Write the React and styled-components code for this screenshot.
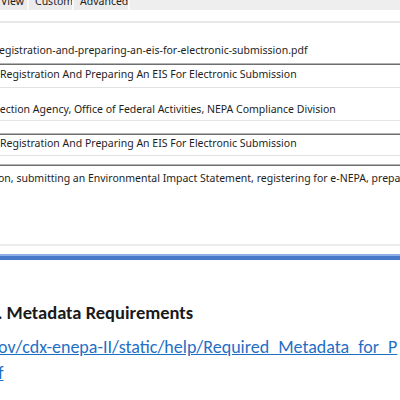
import React from "react";
import styled, { createGlobalStyle } from "styled-components";

const Global = createGlobalStyle`
  html, body { margin: 0; padding: 0; background: #fff; }
  body { width: 400px; height: 400px; overflow: hidden; }
`;

const Page = styled.div`
  width: 400px;
  height: 400px;
  overflow: hidden;
  font-family: "Noto Sans", "Open Sans", sans-serif;
  color: #1e1e1e;
`;

const TabBar = styled.div`
  height: 10px;
  background: #eeeeee;
  display: flex;
  overflow: hidden;
`;

const Tab = styled.div`
  flex: 0 0 ${(p) => p.w}px;
  margin-left: ${(p) => p.ml || 0}px;
  background: #ebebeb;
  border-right: 2px solid #f8f8f8;
  font-size: 10.5px;
  line-height: 14px;
  height: 16px;
  margin-top: -6px;
  padding-left: ${(p) => p.pl}px;
  color: #222;
  white-space: nowrap;
  overflow: hidden;
  box-sizing: border-box;
`;

const Strip = styled.div`
  height: 11px;
  border-bottom: 2px solid #e8e8e8;
`;

const Form = styled.div`
  display: flex;
  flex-direction: column;
  height: 221px;
  border-bottom: 2px solid #ededed;
  font-size: 10.5px;
  white-space: nowrap;
  overflow: hidden;
`;

const Plain = styled.div`
  flex: none;
  margin-top: ${(p) => p.mt || 0}px;
  line-height: ${(p) => p.lh}px;
  padding-bottom: ${(p) => p.pb || 0}px;
  border-bottom: ${(p) => (p.line ? "1px solid #e6e6e6" : "none")};
  margin-left: ${(p) => p.ml || 0}px;
`;

const Field = styled.div`
  flex: none;
  margin-top: ${(p) => p.mt || 0}px;
  line-height: ${(p) => p.lh}px;
  padding-bottom: ${(p) => p.pb || 0}px;
  border-top: 1px solid #6f6f6f;
  box-shadow: 0 -1px 0 #b4b4b4;
  border-bottom: ${(p) => (p.open ? "none" : "1px solid #e2e2e2")};
  margin-left: ${(p) => p.ml || 0}px;
`;

const Rule = styled.div`
  margin-top: 8px;
  height: 4px;
  background: #4a78c8;
  border-top: 2px solid #8fb0e6;
`;

const Content = styled.div`
  font-family: "Carlito", "Lato", "Liberation Sans", sans-serif;
  padding-top: 42px;
`;

const Heading = styled.h2`
  margin: 0;
  font-size: 18.5px;
  font-weight: 700;
  color: #1a1a1a;
  margin-left: -12px;
  white-space: nowrap;
  line-height: 22px;
`;

const Link = styled.a`
  display: block;
  margin-top: 10px;
  margin-left: -2px;
  font-size: 18px;
  line-height: 26px;
  color: #1f6fc5;
  text-decoration: underline;
  white-space: nowrap;
`;

export default function App() {
  return (
    <Page>
      <Global />
      <TabBar>
        <Tab w={29} pl={1}>View</Tab>
        <Tab w={45} pl={6}>Custom</Tab>
        <Tab w={56} pl={6}>Advanced</Tab>
      </TabBar>
      <Strip />
      <Form>
        <Plain lh={20} mt={17} ml={-1}>egistration-and-preparing-an-eis-for-electronic-submission.pdf</Plain>
        <Field lh={19} pb={3} mt={4}>Registration And Preparing An EIS For Electronic Submission</Field>
        <Plain lh={18} pb={2} mt={12} line ml={-4}>tection Agency, Office of Federal Activities, NEPA Compliance Division</Plain>
        <Field lh={17} pb={3} mt={13}>Registration And Preparing An EIS For Electronic Submission</Field>
        <Field lh={24} mt={9} open ml={-2}>on, submitting an Environmental Impact Statement, registering for e-NEPA, preparing</Field>
      </Form>
      <Rule />
      <Content>
        <Heading>1. Metadata Requirements</Heading>
        <Link href="#">
          ov/cdx-enepa-II/static/help/Required_Metadata_for_P
          <br />
          f
        </Link>
      </Content>
    </Page>
  );
}
